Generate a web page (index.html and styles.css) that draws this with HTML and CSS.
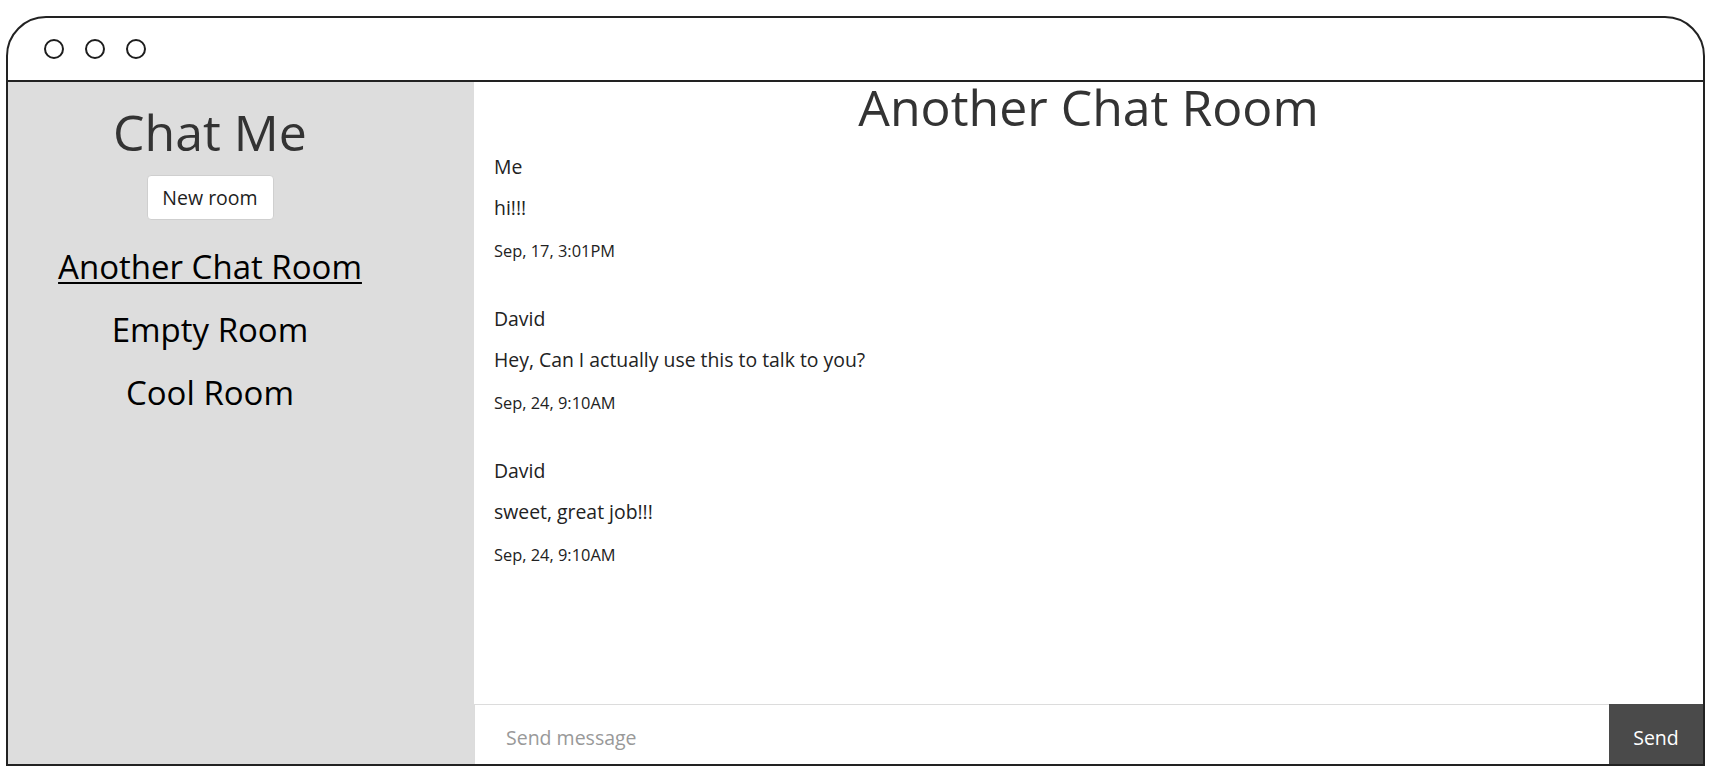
FILE: index.html
```html
<!DOCTYPE html>
<html>
<head>
<meta charset="utf-8">
<title>Chat Me</title>
<link rel="stylesheet" href="styles.css">
</head>
<body>
<div class="window">
  <div class="titlebar">
    <span class="dot"></span>
    <span class="dot"></span>
    <span class="dot"></span>
  </div>
  <div class="app">
    <aside class="sidebar">
      <h1 class="brand">Chat Me</h1>
      <button class="new-room" type="button">New room</button>
      <ul class="rooms">
        <li><a class="room active" href="#">Another Chat Room</a></li>
        <li><a class="room" href="#">Empty Room</a></li>
        <li><a class="room" href="#">Cool Room</a></li>
      </ul>
    </aside>
    <main class="chat">
      <h1 class="room-title">Another Chat Room</h1>
      <div class="messages">
        <div class="message">
          <div class="author">Me</div>
          <div class="text">hi!!!</div>
          <div class="time">Sep, 17, 3:01PM</div>
        </div>
        <div class="message">
          <div class="author">David</div>
          <div class="text">Hey, Can I actually use this to talk to you?</div>
          <div class="time">Sep, 24, 9:10AM</div>
        </div>
        <div class="message">
          <div class="author">David</div>
          <div class="text">sweet, great job!!!</div>
          <div class="time">Sep, 24, 9:10AM</div>
        </div>
      </div>
      <form class="composer">
        <input class="composer-input" type="text" placeholder="Send message">
        <button class="send" type="button">Send</button>
      </form>
    </main>
  </div>
</div>
</body>
</html>
```

FILE: styles.css
```css
* {
  box-sizing: border-box;
}

html, body {
  margin: 0;
  background: #fff;
}

body {
  font-family: "Open Sans", "Liberation Sans", sans-serif;
  color: #333;
  padding: 16px 6px 0;
}

.window {
  height: 750px;
  border: 2px solid #222;
  border-radius: 40px 40px 0 0;
  display: flex;
  flex-direction: column;
  overflow: hidden;
}

.titlebar {
  height: 64px;
  flex: none;
  border-bottom: 2px solid #222;
  display: flex;
  align-items: center;
  gap: 21px;
  padding-left: 36px;
}

.dot {
  width: 20px;
  height: 20px;
  border: 2px solid #1e1e1e;
  border-radius: 50%;
}

.app {
  flex: 1;
  display: flex;
  min-height: 0;
}

.sidebar {
  width: 466px;
  flex: none;
  background: #dddddd;
  display: flex;
  flex-direction: column;
  align-items: center;
  padding: 23px 62px 0 0;
}

.brand {
  font-size: 50px;
  line-height: 1.1;
  font-weight: 400;
  margin: 0 0 15px;
  color: #333;
}

.new-room {
  font-family: inherit;
  font-size: 19.5px;
  line-height: 26px;
  width: 127px;
  height: 45px;
  padding: 0;
  background: #fff;
  border: 1px solid #cfcfcf;
  border-radius: 4px;
  color: #1e1e1e;
}

.rooms {
  list-style: none;
  margin: 24px 0 0;
  padding: 0;
  display: flex;
  flex-direction: column;
  align-items: center;
  gap: 18px;
}

.room {
  font-size: 33px;
  line-height: 45px;
  color: #000;
  text-decoration: none;
}

.room.active {
  text-decoration: underline;
  text-decoration-thickness: 2px;
  text-underline-offset: 3px;
}

.chat {
  flex: 1;
  display: flex;
  flex-direction: column;
  min-width: 0;
}

.room-title {
  font-size: 50px;
  line-height: 1;
  font-weight: 400;
  text-align: center;
  margin: 0;
  color: #333;
}

.messages {
  flex: 1;
  padding: 22px 20px 0;
}

.message {
  margin-bottom: 44px;
}

.author,
.text {
  font-size: 19.4px;
  line-height: 26px;
  color: #222;
}

.author {
  margin-bottom: 15px;
}

.text {
  margin-bottom: 19px;
}

.time {
  font-size: 16.4px;
  line-height: 22px;
  color: #222;
}

.composer {
  display: flex;
  height: 60px;
  flex: none;
  margin: 0;
}

.composer-input {
  flex: 1;
  min-width: 0;
  border: 1px solid #dcdcdc;
  border-right: 0;
  border-bottom: 0;
  padding: 6px 31px 0;
  font-family: inherit;
  font-size: 19.5px;
  color: #333;
  outline: none;
  background: #fff;
}

.composer-input::placeholder {
  color: #999;
}

.send {
  width: 94px;
  flex: none;
  border: 0;
  background: #4a4a4a;
  color: #fff;
  font-family: inherit;
  font-size: 19.5px;
  padding: 6px 0 0;
}
```
